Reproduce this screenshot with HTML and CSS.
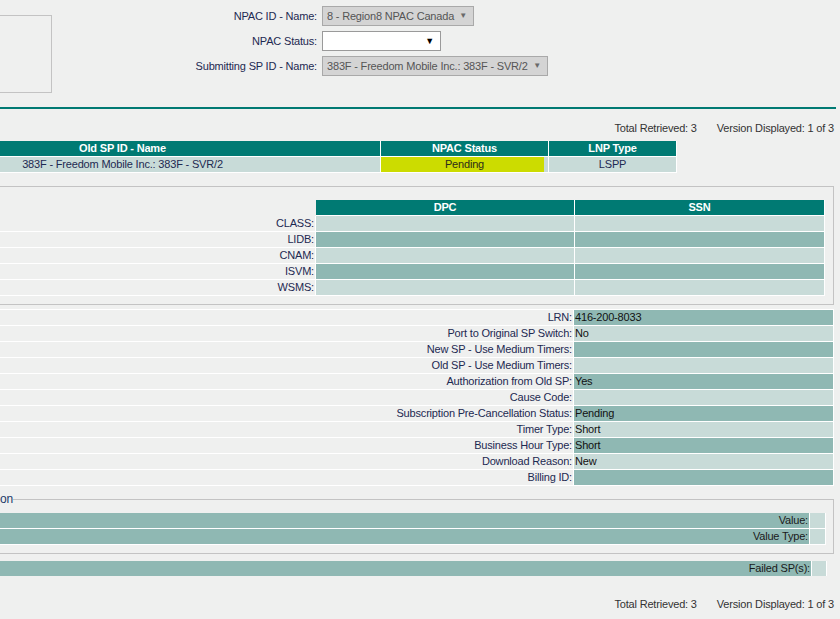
FILE: index.html
```html
<!DOCTYPE html>
<html>
<head>
<meta charset="utf-8">
<title>Subscription Version</title>
<link rel="stylesheet" href="styles.css">
</head>
<body>
<div class="top">
  <div class="blank-box"></div>
  <div class="criteria">
    <span class="crit-label">NPAC ID - Name:</span>
    <div class="sel sel-disabled sel-npac"><span>8 - Region8 NPAC Canada</span><span class="arrow">&#9660;</span></div>
    <span class="crit-label">NPAC Status:</span>
    <div class="sel sel-status"><span></span><span class="arrow">&#9660;</span></div>
    <span class="crit-label">Submitting SP ID - Name:</span>
    <div class="sel sel-disabled sel-sp"><span>383F - Freedom Mobile Inc.: 383F - SVR/2</span><span class="arrow">&#9660;</span></div>
  </div>
</div>
<div class="rule"></div>
<div class="totals"><span>Total Retrieved: 3</span><span>Version Displayed: 1 of 3</span></div>

<table class="grid sp-table">
  <colgroup><col class="c-old"><col class="c-status"><col class="c-lnp"></colgroup>
  <thead>
    <tr><th>Old SP ID - Name</th><th>NPAC Status</th><th>LNP Type</th></tr>
  </thead>
  <tbody>
    <tr class="light"><td class="center">383F - Freedom Mobile Inc.: 383F - SVR/2</td><td class="center pending">Pending</td><td class="center">LSPP</td></tr>
  </tbody>
</table>

<div class="box sccp-box">
  <table class="grid sccp-table">
    <colgroup><col class="c-lab"><col class="c-dpc"><col class="c-ssn"></colgroup>
    <thead>
      <tr><th class="blank-head"></th><th>DPC</th><th>SSN</th></tr>
    </thead>
    <tbody>
      <tr class="light"><td class="lab">CLASS:</td><td></td><td></td></tr>
      <tr class="dark"><td class="lab">LIDB:</td><td></td><td></td></tr>
      <tr class="light"><td class="lab">CNAM:</td><td></td><td></td></tr>
      <tr class="dark"><td class="lab">ISVM:</td><td></td><td></td></tr>
      <tr class="light"><td class="lab">WSMS:</td><td></td><td></td></tr>
    </tbody>
  </table>
</div>

<table class="grid details">
  <colgroup><col class="c-dlab"><col class="c-dval"></colgroup>
  <tbody>
    <tr class="dark"><td class="lab">LRN:</td><td class="val">416-200-8033</td></tr>
    <tr class="light"><td class="lab">Port to Original SP Switch:</td><td class="val">No</td></tr>
    <tr class="dark"><td class="lab">New SP - Use Medium Timers:</td><td class="val"></td></tr>
    <tr class="light"><td class="lab">Old SP - Use Medium Timers:</td><td class="val"></td></tr>
    <tr class="dark"><td class="lab">Authorization from Old SP:</td><td class="val">Yes</td></tr>
    <tr class="light"><td class="lab">Cause Code:</td><td class="val"></td></tr>
    <tr class="dark"><td class="lab">Subscription Pre-Cancellation Status:</td><td class="val">Pending</td></tr>
    <tr class="light"><td class="lab">Timer Type:</td><td class="val">Short</td></tr>
    <tr class="dark"><td class="lab">Business Hour Type:</td><td class="val">Short</td></tr>
    <tr class="light"><td class="lab">Download Reason:</td><td class="val">New</td></tr>
    <tr class="dark"><td class="lab">Billing ID:</td><td class="val"></td></tr>
  </tbody>
</table>

<fieldset class="opt-group">
  <legend>on</legend>
  <table class="grid opt-table">
    <colgroup><col class="c-olab"><col class="c-oval"></colgroup>
    <tbody>
      <tr><td class="lab dark-cell">Value:</td><td class="light-cell"></td></tr>
      <tr><td class="lab dark-cell">Value Type:</td><td class="light-cell"></td></tr>
    </tbody>
  </table>
</fieldset>

<table class="grid failed">
  <colgroup><col class="c-flab"><col class="c-fval"></colgroup>
  <tbody>
    <tr><td class="lab dark-cell">Failed SP(s):</td><td class="light-cell"></td></tr>
  </tbody>
</table>

<div class="totals footer-totals"><span>Total Retrieved: 3</span><span>Version Displayed: 1 of 3</span></div>
</body>
</html>
```

FILE: styles.css
```css
html, body {
  margin: 0;
  padding: 0;
}
body {
  width: 840px;
  height: 619px;
  overflow: hidden;
  background: #eff0ef;
  font-family: "Liberation Sans", Arial, sans-serif;
  font-size: 11px;
  letter-spacing: -0.18px;
  color: #1d2951;
}

/* ---------- top criteria ---------- */
.top {
  display: flex;
  align-items: flex-start;
  padding-bottom: 14px;
}
.blank-box {
  margin: 15px 0 0 -2px;
  width: 52px;
  height: 76px;
  border: 1px solid #c3c3c3;
  flex: none;
}
.criteria {
  display: grid;
  grid-template-columns: 265px auto;
  column-gap: 5px;
  row-gap: 5px;
  padding-top: 6px;
  align-items: center;
  justify-items: start;
}
.crit-label {
  justify-self: end;
  line-height: 14px;
}
.sel {
  box-sizing: border-box;
  height: 20px;
  display: flex;
  align-items: center;
  justify-content: space-between;
  padding: 0 6px 0 4px;
  border: 1px solid #a9a9a9;
  background: #fff;
  color: #111;
  white-space: nowrap;
}
.sel-disabled {
  background: #d4d4d4;
  color: #555;
}
.sel-npac { width: 152px; }
.sel-status { width: 119px; border-color: #9a9a9a; }
.sel-sp { width: 226px; }
.arrow {
  font-size: 8px;
  line-height: 8px;
}
.sel-disabled .arrow { color: #6a6a6a; }
.sel-status .arrow { color: #000; font-size: 9px; }

.rule {
  width: 836px;
  height: 2px;
  background: #007a73;
}

.totals {
  display: flex;
  justify-content: flex-end;
  gap: 20px;
  padding: 12px 6px 0 0;
  line-height: 14px;
  color: #333;
}

/* ---------- grids ---------- */
.grid {
  border-collapse: separate;
  border-spacing: 0;
  table-layout: fixed;
}
.grid th,
.grid td {
  padding: 0 1px;
  line-height: 15px;
  height: 15px;
  box-sizing: border-box;
  border-right: 1px solid #fff;
  border-bottom: 1px solid #fff;
  white-space: nowrap;
  overflow: hidden;
  vertical-align: middle;
}
.grid th {
  height: 16px;
  background: #007a73;
  color: #fff;
  font-weight: bold;
  text-align: center;
}
.grid td { height: 16px; }
.light td { background: #c8dbd8; }
.dark td { background: #8fb8b3; }
.light-cell { background: #c8dbd8; }
.dark-cell { background: #8fb8b3; }
.center { text-align: center; }
.lab { text-align: right; }
.grid td.lab { background: transparent; }
.grid td.lab.dark-cell { background: #8fb8b3; color: #1a1a1a; }
.val { color: #111; }

/* SP table */
.sp-table {
  margin-top: 6px;
  margin-left: -135px;
  width: 812px;
}
.c-old { width: 516px; }
.c-status { width: 168px; }
.c-lnp { width: 128px; }
.sp-table td { color: #1d2951; }
.grid td.pending {
  background: linear-gradient(to right, #ccdc00 calc(100% - 4px), #c8dbd8 0);
  color: #2b2b1a;
}

/* SCCP box */
.box {
  box-sizing: border-box;
  border: 1px solid #c3c3c3;
}
.sccp-box {
  margin: 13px 0 0 -2px;
  width: 836px;
  padding: 13px 0 8px 0;
}
.sccp-table { width: 826px; }
.c-lab { width: 317px; }
.c-dpc { width: 259px; }
.c-ssn { width: 250px; }
.sccp-table th.blank-head {
  background: transparent;
  border: none;
}

/* details */
.details {
  margin-top: 4px;
  width: 834px;
  border-top: 1px solid #fff;
}
.c-dlab { width: 574px; }
.c-dval { width: 260px; }

/* optional data group */
.opt-group {
  box-sizing: border-box;
  margin: 6px 0 0 -2px;
  width: 836px;
  padding: 0 0 8px 0;
  border: 1px solid #c3c3c3;
  min-width: 0;
}
.opt-group legend {
  padding: 0;
  margin-left: 1px;
  line-height: 14px;
  font-size: 12px;
  color: #1d3a6a;
}
.opt-table {
  margin-top: 7px;
  width: 827px;
}
.c-olab { width: 811px; }
.c-oval { width: 16px; }

/* failed */
.failed {
  margin-top: 7px;
  width: 827px;
}
.c-flab { width: 812px; }
.c-fval { width: 15px; }
.failed td { border-bottom: none; height: 15px; }

.footer-totals {
  padding-top: 21px;
}
```
